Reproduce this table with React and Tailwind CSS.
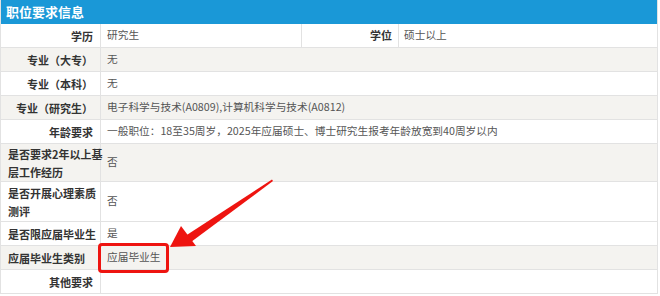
const font = { fontFamily: '"Noto Sans CJK SC", "Noto Sans", sans-serif' };

const rows = [
  { label: '专业（大专）', value: '无', gray: true },
  { label: '专业（本科）', value: '无' },
  { label: '专业（研究生）', value: '电子科学与技术(A0809),计算机科学与技术(A0812)', gray: true },
  { label: '年龄要求', value: '一般职位：18至35周岁，2025年应届硕士、博士研究生报考年龄放宽到40周岁以内' },
  {
    label: (
      <>
        是否要求2年以上基
        <br />
        层工作经历
      </>
    ),
    key: 'grassroots',
    value: '否',
    gray: true,
    tall: 'h-[38px]',
    left: true,
  },
  {
    label: (
      <>
        是否开展心理素质
        <br />
        测评
      </>
    ),
    key: 'psych',
    value: '否',
    tall: 'h-[40px]',
    left: true,
  },
  { label: '是否限应届毕业生', value: '是', left: true },
  { label: '应届毕业生类别', value: '应届毕业生', gray: true, left: true },
  { label: '其他要求', value: '' },
];

function Label({ children, left }) {
  return (
    <div
      className={`flex w-[100px] shrink-0 items-center border-r border-[#e2e2e2] text-[11px] font-bold leading-[18px] text-[#333] ${
        left ? 'justify-start pl-[7px]' : 'justify-end pr-[7px]'
      }`}
    >
      <span className="whitespace-nowrap">{children}</span>
    </div>
  );
}

export default function App() {
  return (
    <div className="relative h-[296px] w-[660px] bg-white" style={font}>
      <div className="w-[658px] border-x border-[#e2e2e2]">
        <div className="flex h-[24px] items-center bg-[#1a98d7] pl-[5px] text-[13px] font-bold text-white">
          职位要求信息
        </div>

        <div className="flex h-[24px] border-b border-[#e2e2e2] bg-white">
          <Label>学历</Label>
          <div className="flex w-[201px] shrink-0 items-center border-r border-[#e2e2e2] pl-[6px] text-[10.7px] text-[#555]">
            研究生
          </div>
          <div className="flex w-[97px] shrink-0 items-center justify-end border-r border-[#e2e2e2] pr-[6px] text-[11px] font-bold text-[#333]">
            学位
          </div>
          <div className="flex flex-1 items-center pl-[5px] text-[10.7px] text-[#555]">硕士以上</div>
        </div>

        {rows.map((row) => (
          <div
            key={row.key || row.label}
            className={`flex border-b border-[#e2e2e2] ${row.tall || 'h-[24px]'} ${row.gray ? 'bg-[#f4f3f0]' : 'bg-white'}`}
          >
            <Label left={row.left}>{row.label}</Label>
            <div className="flex flex-1 items-center pl-[6px] text-[10.7px] text-[#555]">{row.value}</div>
          </div>
        ))}
      </div>

      {/* callout box */}
      <div className="absolute left-[98px] top-[243px] h-[30px] w-[71px] rounded-[4px] border-[3px] border-[#ee1410]" />

      {/* arrow */}
      <svg className="absolute left-0 top-0" width="660" height="296" viewBox="0 0 660 296">
        <polygon points="272,179.5 273,181 191,242 186,235.5" fill="#ee1410" />
        <polygon points="170,247 181,226 196,246" fill="#ee1410" />
      </svg>
    </div>
  );
}
